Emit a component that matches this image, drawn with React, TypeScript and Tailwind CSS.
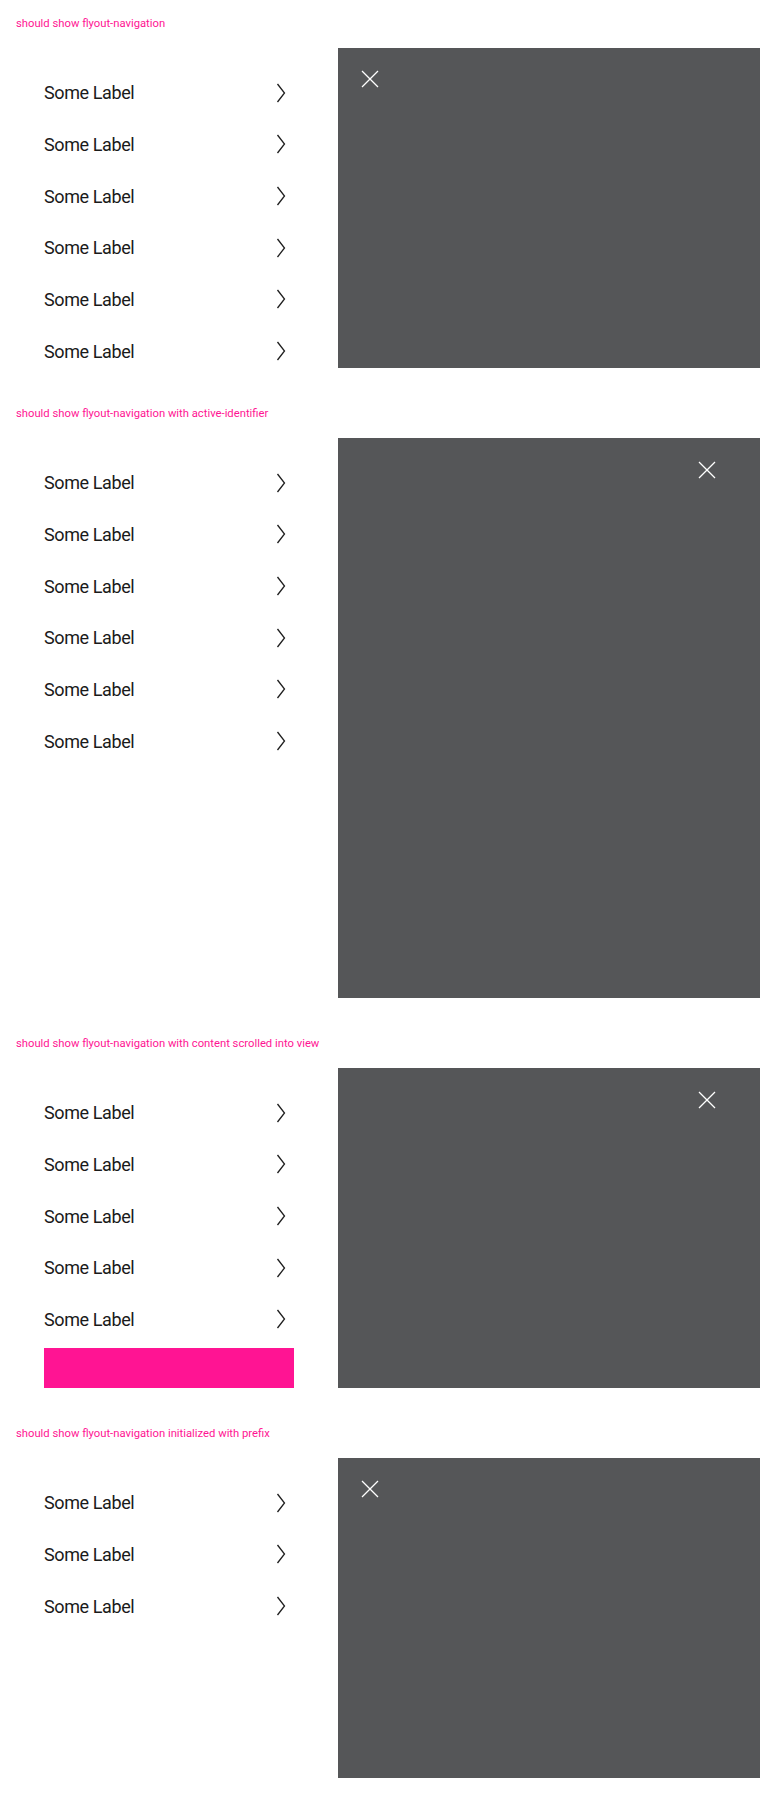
import React from "react";

interface Demo {
  title: string;
  rows: number;
  panelHeight: string;
  closeRight: boolean;
  scrolled?: boolean;
}

const demos: Demo[] = [
  { title: "should show flyout-navigation", rows: 6, panelHeight: "h-[320px]", closeRight: false },
  { title: "should show flyout-navigation with active-identifier", rows: 6, panelHeight: "h-[560px]", closeRight: true },
  { title: "should show flyout-navigation with content scrolled into view", rows: 5, panelHeight: "h-[320px]", closeRight: true, scrolled: true },
  { title: "should show flyout-navigation initialized with prefix", rows: 3, panelHeight: "h-[320px]", closeRight: false },
];

const Chevron = () => (
  <svg width="10" height="20" viewBox="0 0 10 20" fill="none" className="mr-[8px]">
    <polyline points="1.5,1 8.5,10 1.5,19" stroke="#1f1f1f" strokeWidth="1.3" strokeLinejoin="miter" />
  </svg>
);

const CloseIcon = () => (
  <svg width="18" height="18" viewBox="0 0 18 18" fill="none">
    <line x1="1" y1="1" x2="17" y2="17" stroke="#ffffff" strokeWidth="1.3" />
    <line x1="17" y1="1" x2="1" y2="17" stroke="#ffffff" strokeWidth="1.3" />
  </svg>
);

const FlyoutNavigation: React.FC<{ demo: Demo }> = ({ demo }) => {
  return (
    <div className={`flex ${demo.panelHeight}`}>
      {/* menu column */}
      <div className="w-[338px] shrink-0 overflow-hidden pt-[19px]">
        <ul className="ml-[44px] w-[250px]">
          {Array.from({ length: demo.rows }).map((_, i) => (
            <li
              key={i}
              className="flex h-[51.67px] items-center justify-between text-[18px] tracking-[-0.4px] text-[#1a1a1a]"
            >
              <span>Some Label</span>
              <Chevron />
            </li>
          ))}
        </ul>
        {demo.scrolled && <div className="ml-[44px] mt-[3px] h-[80px] w-[250px] bg-[#ff1493]" />}
      </div>

      {/* flyout panel */}
      <div className="relative flex-1 bg-[#555658]">
        <button
          className={
            demo.closeRight
              ? "absolute right-[44px] top-[23px] flex"
              : "absolute left-[23px] top-[22px] flex"
          }
        >
          <CloseIcon />
        </button>
      </div>
    </div>
  );
};

export default function App() {
  return (
    <div className="flex min-h-[1800px] flex-col gap-[22px] bg-white font-['Roboto',sans-serif]">
      {demos.map((demo) => (
        <section key={demo.title}>
          <h2 className="px-4 py-4 text-[11.25px] leading-[16px] text-[#ff1493]">{demo.title}</h2>
          <FlyoutNavigation demo={demo} />
        </section>
      ))}
    </div>
  );
}
